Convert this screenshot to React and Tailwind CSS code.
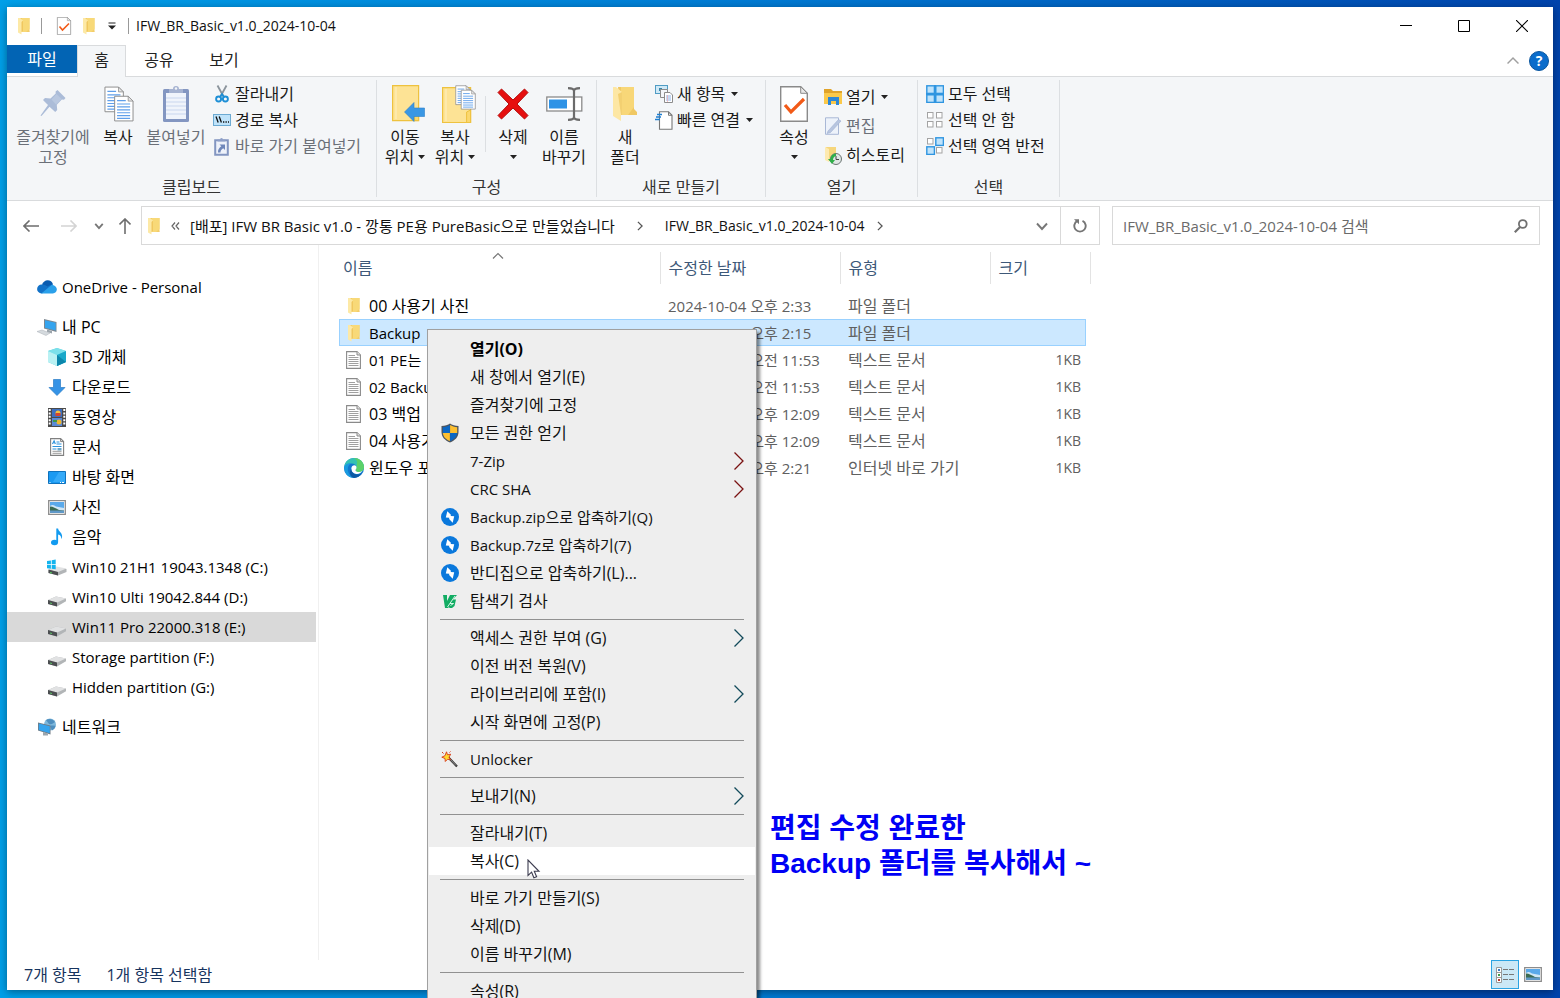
import React from 'react';

/* ---------- shared icons ---------- */
const Folder = ({ className = 'h-[18px] w-[14px]' }) => (
  <svg viewBox="0 0 14 18" className={className} aria-hidden="true">
    <path d="M3 1h9.500v13.500L13 15H5z" fill="#f3cd6a" />
    <path d="M5 1h7.500v11L9 15H5z" fill="#f8d978" />
    <path d="M1 1h2l3 2.500v11L4.500 15v2.500L1 15.500z" fill="#fde9a6" />
    <path d="M6 3.500v11L4.500 15V5z" fill="#f0c75f" />
  </svg>
);
const BigFolder = () => (
  <svg viewBox="0 0 24 36" className="h-9 w-6" aria-hidden="true">
    <path d="M5 1h16v22l3 3v3H8z" fill="#f0c863" />
    <path d="M8 1h13v20l-6 8H8z" fill="#f8d778" />
    <path d="M0 1h3l6 5v23H8v6L0 30z" fill="#fde7a4" />
    <path d="M9 6v23H8L5 8z" fill="#f3d071" />
  </svg>
);
const Caret = () => (
  <svg viewBox="0 0 7 4" className="h-1 w-[7px] shrink-0" aria-hidden="true"><path d="M0 0h7L3.500 4z" fill="#222" /></svg>
);
const Chev = ({ d, className, stroke = '#666', w = 1.500 }) => (
  <svg viewBox="0 0 12 12" className={className} aria-hidden="true"><path d={d} fill="none" stroke={stroke} strokeWidth={w} /></svg>
);
const DocCheck = ({ className }) => (
  <svg viewBox="0 0 28 36" className={className} aria-hidden="true">
    <path d="M.7.7h20l6.600 6.600v28H.7z" fill="#fff" stroke="#8a8a8a" strokeWidth="1.400" />
    <path d="M20.700.7v6.600h6.600z" fill="#e8e8e8" stroke="#8a8a8a" />
    <path d="M5 19l6 7L24 13" fill="none" stroke="#f25a17" strokeWidth="3.200" />
  </svg>
);
const PageLines = ({ x, y }) => (
  <g transform={`translate(${x} ${y})`}>
    <path d="M.5.5h14l5 5v20.500H.5z" fill="#fff" stroke="#8c8c8c" />
    <path d="M14.500.5v5h5z" fill="#e6e6e6" stroke="#8c8c8c" strokeWidth=".8" />
    <path d="M3 5h9M3 8.500h13.500M3 11.500h13.500M3 14.500h13.500M3 17.500h13.500M3 20.500h13.500M3 23.300h13.500" stroke="#5f9fea" strokeWidth="1.200" />
  </g>
);

/* ---------- ribbon icons ---------- */
const PinIcon = () => (
  <svg viewBox="0 0 26 27" className="h-[27px] w-[26px]" aria-hidden="true">
    <path d="M17.500 0l8 8-1.500 1.800-2.200-.2-5 5.200.4 5.200-2 2L9.500 16.700 1.500 26l-1-.5L8 15 3 10l2-2 5.500.5 5.200-5-.1-2z" fill="#abbcd8" />
    <path d="M16.500 4l5 5-5.500 5.500-4.500-5z" fill="#b9c8e0" />
  </svg>
);
const CopyIcon = () => (
  <svg viewBox="0 0 31 37" className="ml-0.5 h-9 w-[30px]" aria-hidden="true"><PageLines x={.5} y={.5} /><PageLines x={10.500} y={10} /></svg>
);
const PasteIcon = () => (
  <svg viewBox="0 0 26 37" className="h-[37px] w-[26px]" aria-hidden="true">
    <rect x="0" y="4" width="26" height="33" rx="1.500" fill="#8396c1" />
    <rect x="3" y="8" width="20" height="26" fill="#f0f4fb" />
    <path d="M3 13h20M3 17h20M3 21h20M3 25h20M3 29h20" stroke="#c9d6ee" />
    <path d="M6 8V4h4a3 3 0 016 0h4v4z" fill="#a6b3d1" /><circle cx="13" cy="3.500" r="1.200" fill="#f4f6f8" />
  </svg>
);
const CutIcon = () => (
  <svg viewBox="0 0 18 18" className="size-[18px]" aria-hidden="true">
    <path d="M4.500.5l6 11M13.500.5l-6 11" stroke="#8b949c" strokeWidth="1.800" fill="none" />
    <circle cx="5.600" cy="14" r="2.500" fill="none" stroke="#1d8fd6" strokeWidth="1.900" />
    <circle cx="12.400" cy="14" r="2.500" fill="none" stroke="#1d8fd6" strokeWidth="1.900" />
    <path d="M7 12l2-3 2 3" fill="none" stroke="#1d8fd6" strokeWidth="1.600" />
  </svg>
);
const PathIcon = () => (
  <svg viewBox="0 0 18 12" className="h-3 w-[18px]" aria-hidden="true">
    <rect x=".5" y=".5" width="17" height="11" fill="#bfe3fa" stroke="#6caad2" />
    <path d="M3 2.500l2.200 6M6.200 2.500l2.200 6" stroke="#111" strokeWidth="1.300" />
    <path d="M10 8h1.300M12.500 8h1.300M15 8h1" stroke="#111" strokeWidth="1.300" />
  </svg>
);
const ShortcutPasteIcon = () => (
  <svg viewBox="0 0 15 19" className="h-[19px] w-[15px]" aria-hidden="true">
    <path d="M1.200 3.200h12.600v14.600H1.200z" fill="#eef2fa" stroke="#8396c1" strokeWidth="2" />
    <path d="M3.500 4.500V2.500H6a1.500 1.500 0 013 0h2.500v2z" fill="#8fa0c8" />
    <path d="M5.500 7.500H11V13L9.200 11.200c-2 1.300-2.700 2.500-2.700 4.300H4c-.2-2.800 1-4.500 3.300-6.200z" fill="#6f87ba" />
  </svg>
);
const MoveIcon = () => (
  <svg viewBox="0 0 33 37" className="ml-1.5 h-[37px] w-[33px]" aria-hidden="true">
    <path d="M.6.6h26v35H.6z" fill="#fde395" stroke="#eec23f" strokeWidth="1.200" />
    <path d="M26.600 23v12.600h-4V25z" fill="#fbd86f" stroke="#eec23f" />
    <path d="M4 2v32" stroke="#fff0bf" /><path d="M12.500 27L22 17.500v5.500h10.500v8.500H22v5z" fill="#3a97e4" stroke="#2b7fca" strokeWidth=".6" />
  </svg>
);
const CopyToIcon = () => (
  <svg viewBox="0 0 34 38" className="ml-2 h-[38px] w-[34px]" aria-hidden="true">
    <path d="M.6 2.600h28v35H.6z" fill="#fde395" stroke="#eec23f" strokeWidth="1.200" />
    <path d="M28.600 25v12.600h-4V27z" fill="#fbd86f" stroke="#eec23f" /><path d="M4 4v32" stroke="#fff0bf" />
    <g transform="translate(13 0) scale(.74)"><PageLines x={.5} y={.5} /></g><g transform="translate(18.500 4.500) scale(.74)"><PageLines x={.5} y={.5} /></g>
  </svg>
);
const DeleteIcon = () => (
  <svg viewBox="0 0 32 32" className="size-8" aria-hidden="true">
    <path d="M4.500 1L16 12 27.500 1 31 4.500 20 16l11 11.500-3.500 3.500L16 20 4.500 31 1 27.500 12 16 1 4.500z" fill="#e60f0f" stroke="#b50c0c" />
  </svg>
);
const RenameIcon = () => (
  <svg viewBox="0 0 37 34" className="h-[34px] w-[37px]" aria-hidden="true">
    <rect x=".8" y="10" width="35" height="14" fill="#fff" stroke="#8a8a8a" strokeWidth="1.300" />
    <rect x="3" y="12.500" width="18" height="9" fill="#2e93e6" />
    <path d="M22 1.200c3 0 6 .3 6 2.800 0-2.500 3-2.800 6-2.800M22 32.800c3 0 6-.3 6-2.800 0 2.500 3 2.800 6 2.800M28 3v28" fill="none" stroke="#6b6b6b" strokeWidth="2.200" />
  </svg>
);
const NewItemIcon = () => (
  <svg viewBox="0 0 18 18" className="size-[18px]" aria-hidden="true">
    <rect x=".5" y=".5" width="12" height="8" fill="#cfe9f7" stroke="#4f9cc4" /><path d="M4 3h3v3H4z" fill="#3b86a8" />
    <path d="M5.500 4.500h7v8h-7z" fill="#f4f7fb" stroke="#8c8c8c" /><path d="M9.500 7.500h5.500l2.500 2.500v7.500h-8z" fill="#fff" stroke="#8c8c8c" />
    <path d="M11 11h5M11 13h5M11 15h5" stroke="#8db4ea" /><path d="M12.500 10v7" stroke="#f0a0a0" strokeWidth=".6" />
  </svg>
);
const EasyIcon = () => (
  <svg viewBox="0 0 18 19" className="h-[19px] w-[18px]" aria-hidden="true">
    <path d="M4.500.8h9l3.500 3.500v13.900H4.500z" fill="#fff" stroke="#777" strokeWidth="1.100" /><path d="M13.500.8v3.500H17" fill="none" stroke="#777" />
    <path d="M2 3.500h5M1 6h5M0 8.500h5" stroke="#1f7fd1" strokeWidth="1.300" />
  </svg>
);
const OpenIcon = () => (
  <svg viewBox="0 0 18 16" className="h-4 w-[18px]" aria-hidden="true">
    <path d="M0 0h7l2 2h9v13H0z" fill="#e0a32a" /><path d="M0 4h18v11H0z" fill="#fbc94a" />
    <path d="M4 16V8h11v8h-3v-4H7v4z" fill="#2e87d6" />
  </svg>
);
const EditIcon = () => (
  <svg viewBox="0 0 18 18" className="size-[18px]" aria-hidden="true">
    <path d="M1.500.8h13v16.500h-13z" fill="#edf2fa" stroke="#a9b8d6" /><path d="M4 14L14.500 2.500l2.500 1.500L6.500 15.500 3 16.500z" fill="#b7c5df" stroke="#9fb0d2" strokeWidth=".6" />
  </svg>
);
const HistoryIcon = () => (
  <svg viewBox="0 0 18 19" className="h-[19px] w-[18px]" aria-hidden="true">
    <path d="M2 1h10v14H4z" fill="#f6d67c" /><path d="M1 1l4 2v13l-4-2z" fill="#fdeab0" />
    <circle cx="12" cy="13" r="5.500" fill="#dfe6e4" stroke="#6b7472" /><path d="M12 10v3.500h3" stroke="#444" fill="none" />
    <path d="M12 7.500A5.500 5.500 0 006.500 13H4l4 5 3-4H9c0-2 1-3.500 3-4z" fill="#2fae49" />
  </svg>
);
const SelectIcon = ({ on }) => (
  <svg viewBox="0 0 18 18" className="size-[18px]" aria-hidden="true">
    {[[1, 1], [10, 1], [1, 10], [10, 10]].map(([x, y], i) =>
      on[i]
        ? <rect key={i} x={x - .2} y={y - .2} width="7.600" height="7.600" fill="#bfe3fb" stroke="#2f95e0" strokeWidth="1.400" />
        : <rect key={i} x={x + .5} y={y + .5} width="5.500" height="5.500" fill="#fff" stroke="#a3a3a3" />)}
    {on.every(Boolean) && <path d="M9 0v18M0 9h18" stroke="#2f95e0" strokeWidth="2" />}
  </svg>
);

/* ---------- tree icons ---------- */
const treeIcons = {
  cloud: (
    <svg viewBox="0 0 20 14" className="h-[14px] w-5"><path d="M5 4.500C6 1.800 8.200.2 10.700.2c2.500 0 4.500 1.500 5.200 3.700L12 8z" fill="#0a5cb0" /><path d="M4.500 13.500A4.500 4.500 0 014.700 4.500c2-.3 4 .5 5.500 2L16 3.900l-1 3-10 6.600z" fill="#1272c8" /><path d="M4.300 13.500L14.500 5c3 0 5.300 1.800 5.300 4.600 0 2.300-1.700 3.900-4 3.900z" fill="#2aa0ea" /></svg>
  ),
  pc: (
    <svg viewBox="0 0 20 17" className="h-[17px] w-5"><path d="M7 0l12.500 3v10L7 9.500z" fill="#7d8790" /><path d="M8 1.300l10.700 2.500v7.700L8 8.800z" fill="#35a4ee" /><path d="M10 10.500l5 1.500v2.500l-5-1.500z" fill="#9ca5ac" /><path d="M0 12.500l5-1.500 8 3-4 2.500z" fill="#d5dade" stroke="#aab0b6" strokeWidth=".5" /></svg>
  ),
  cube: (
    <svg viewBox="0 0 18 18" className="size-[18px]"><path d="M9 0l9 3v11l-9 4-9-4V3z" fill="#5fd3e0" /><path d="M9 0l9 3-9 4-9-4z" fill="#7be0ea" /><path d="M0 3l9 4v11l-9-4z" fill="#b9f1f3" /><path d="M9 7l9-4v11l-9 4z" fill="#1aa8c9" /><path d="M9 7l9 7-9 4z" fill="#0c86ab" /></svg>
  ),
  down: (<svg viewBox="0 0 18 17" className="h-[17px] w-[18px]"><path d="M5.500.5h7v8h4.500L9 16.500 1 8.500h4.500z" fill="#3593e6" stroke="#2a7bc6" strokeWidth=".7" /></svg>),
  video: (
    <svg viewBox="0 0 18 19" className="h-[19px] w-[18px]"><path d="M0 0h18v19H0z" fill="#4a4a4a" /><path d="M1.700 1v17M16.300 1v17" stroke="#fff" strokeWidth="2" strokeDasharray="2 1.400" /><path d="M4 1h10v8H4z" fill="#3d6fc0" /><path d="M4 10h10v8H4z" fill="#5b8ad6" /><circle cx="10" cy="5" r="2.500" fill="#f3c13a" /><path d="M7.500 5h5v3h-5z" fill="#d4452f" /><circle cx="11" cy="14" r="2.500" fill="#f0b62f" /><path d="M5 12h4v2H5z" fill="#3f9a49" /></svg>
  ),
  doc: (
    <svg viewBox="0 0 18 18" className="size-[18px]"><path d="M2.600.6h10l3 3v13.800h-13z" fill="#fff" stroke="#808080" strokeWidth="1.100" /><path d="M12.600.6v3h3" fill="none" stroke="#808080" /><path d="M4.500 6l1.600-3 1.200 3M8.500 4h3M8.500 6h5M4.500 8.500h9M4.500 11h4" stroke="#2c92dc" strokeWidth="1.200" fill="none" /><path d="M9.500 10h4v2.500h-4z" fill="#6aa6c9" /><path d="M4.500 13.300h9M4.500 15.300h9" stroke="#9a9a9a" /></svg>
  ),
  desktop: (<svg viewBox="0 0 18 13" className="h-[13px] w-[18px]"><path d="M.5.5h17v12H.5z" fill="#1a9af2" stroke="#0f72bd" /><path d="M11 1h6v10H5z" fill="#35aaf8" /><path d="M1.500 11.500h1M12 11.500h1M14 11.500h2" stroke="#fff" /></svg>),
  photo: (<svg viewBox="0 0 18 15" className="h-[15px] w-[18px]"><path d="M.7.7h16.600v13.600H.7z" fill="#fff" stroke="#8c8c8c" strokeWidth="1.300" /><path d="M2 2h14v6H2z" fill="#5aa9ea" /><path d="M2 6c3-2 4-1 6 .5L16 8v2H2z" fill="#cfe6f6" /><path d="M2 6.500c3 0 6 2 9 3.500l5 .5V11H2z" fill="#3c6b52" /><path d="M2 10.500h14V13H2z" fill="#5f98c7" /></svg>),
  music: (<svg viewBox="0 0 18 18" className="size-[18px]"><ellipse cx="6.500" cy="14.500" rx="3.500" ry="2.800" fill="#139bf0" /><path d="M8.300 14.500V.5h1.800c.2 3 4.400 4 4 8.500-.2 1-.6 1.700-1 2 .4-2.500-.8-4-3-4.500v8z" fill="#139bf0" /></svg>),
  winDrive: (
    <svg viewBox="0 0 20 18" className="mt-0.5 h-[18px] w-5"><path d="M1.500 11l8-2.500 10 1.500v3L11 16.500 1.500 14z" fill="#b2b5b7" /><path d="M1.500 10.500l8-3 10 2L11 13z" fill="#e1e2e3" /><path d="M1.500 10.500L11 13v3.500L1.500 14z" fill="#4b4e50" /><path d="M3 13l2 .5v1L3 14z" fill="#4fd45b" /><path d="M0 2l3.900-.6v3.800H0zM4.700 1.200l4-.7v4.700h-4zM0 6h3.900v3.700L0 9.200zM4.700 6h4v4.200l-4-.5z" fill="#14b4ee" /></svg>
  ),
  drive: (
    <svg viewBox="0 0 18 11" className="mt-2 h-[11px] w-[18px]"><path d="M0 4l8-3.500 10 2v2.800L9 10.500 0 8z" fill="#b2b5b7" /><path d="M0 4L8 .5l10 2L9 6.500z" fill="#e1e2e3" /><path d="M0 4l9 2.500v4L0 8z" fill="#4b4e50" /><path d="M2 6.500l2 .6v1l-2-.6z" fill="#59c564" /></svg>
  ),
  network: (
    <svg viewBox="0 0 18 18" className="size-[18px]"><circle cx="12" cy="6.500" r="6" fill="#7fb8dc" /><path d="M8 2c3-2 7-1 9 2-2 1-3 3-6 2zM12 8c2-1 4 0 5.500-.5 0 2-1.500 4-3.500 5z" fill="#4f8fbf" /><path d="M0 4.500l12.500 3v9L0 12.500z" fill="#6f7a83" /><path d="M.8 5.500l11 2.700v7L.8 12z" fill="#35a4ee" /><path d="M5 14l5 1.500v2H5z" fill="#9ba5ad" /></svg>
  ),
};

const tree = [
  { icon: 'cloud', label: 'OneDrive - Personal', root: true, latin: true },
  { icon: 'pc', label: '내 PC', root: true, gap: true },
  { icon: 'cube', label: '3D 개체' },
  { icon: 'down', label: '다운로드' },
  { icon: 'video', label: '동영상' },
  { icon: 'doc', label: '문서' },
  { icon: 'desktop', label: '바탕 화면' },
  { icon: 'photo', label: '사진' },
  { icon: 'music', label: '음악' },
  { icon: 'winDrive', label: 'Win10 21H1 19043.1348 (C:)', latin: true },
  { icon: 'drive', label: 'Win10 Ulti 19042.844 (D:)', latin: true },
  { icon: 'drive', label: 'Win11 Pro 22000.318 (E:)', latin: true, active: true },
  { icon: 'drive', label: 'Storage partition (F:)', latin: true },
  { icon: 'drive', label: 'Hidden partition (G:)', latin: true },
  { icon: 'network', label: '네트워크', root: true, gap: true },
];

/* ---------- file list ---------- */
const TextFile = () => (
  <svg viewBox="0 0 15 18" className="h-[18px] w-[15px]" aria-hidden="true">
    <path d="M.6.6h10.400l3.400 3.400v13.400H.6z" fill="#fff" stroke="#8a8a8a" strokeWidth="1.100" /><path d="M11 .6V4h3.400" fill="#e5e5e5" stroke="#8a8a8a" />
    <path d="M2.500 4.500H9M2.500 6.500h10M2.500 8.500h10M2.500 10.500h10M2.500 12.500h10M2.500 14.500h10" stroke="#a0a0a0" />
  </svg>
);
const EdgeIcon = () => (
  <svg viewBox="0 0 20 20" className="size-5" aria-hidden="true">
    <circle cx="10" cy="10" r="10" fill="#1178cf" />
    <path d="M.3 8.500C1 3.500 5 0 10 0c6 0 10 4.500 10 9 0 3-2.300 5-5 5-2 0-3.500-.8-3.500-1.800 0-.8 1-1.200 1-2.700 0-2-1.800-4-5-4-3.500 0-6 1.500-7.200 3z" fill="#35c1b4" />
    <path d="M10 0c6 0 10 4.500 10 9 0 3-2.300 5-5 5-2 0-3.500-.8-3.500-1.800 0-.8 1-1.200 1-2.700C12.500 6 15 3 10 0z" fill="#5bd16a" />
    <path d="M.3 8.500C2 5.500 5 5 7.500 5.500c-3 .6-4.200 4-3.500 7.500.6 3.300 3 6 6.500 7A10 10 0 01.3 8.500z" fill="#1a9be0" />
    <path d="M7.300 10.500c.2-2 1.600-3.200 3-3.200 1.500 0 2.200 1 2.200 2.200 0 1.500-1 1.900-1 2.700 0 1 1.500 1.800 3.500 1.800 1.300 0 2.500-.4 3.500-1.200-1.300 2.200-3.500 3.500-6 3.200-3.200-.3-5.400-2.700-5.200-5.500z" fill="#fff" />
    <path d="M7.300 10.500c-.2 3.500 2.500 6.500 7.500 6 1.200-.1 2.300-.8 3-1.500A10 10 0 0110 20c-3.500-1-5.500-5-2.700-9.500z" fill="#0c59a4" />
  </svg>
);
const files = [
  { icon: <Folder />, name: '00 사용기 사진', date: '2024-10-04 오후 2:33', type: '파일 폴더', size: '' },
  { icon: <Folder />, name: 'Backup', date: '2024-10-04 오후 2:15', type: '파일 폴더', size: '', selected: true, latin: true },
  { icon: <TextFile />, name: '01 PE는', date: '2024-10-04 오전 11:53', type: '텍스트 문서', size: '1KB', latin: true },
  { icon: <TextFile />, name: '02 Backup', date: '2024-10-04 오전 11:53', type: '텍스트 문서', size: '1KB', latin: true },
  { icon: <TextFile />, name: '03 백업', date: '2024-10-04 오후 12:09', type: '텍스트 문서', size: '1KB' },
  { icon: <TextFile />, name: '04 사용기', date: '2024-10-04 오후 12:09', type: '텍스트 문서', size: '1KB' },
  { icon: <EdgeIcon />, name: '윈도우 포', date: '2024-10-04 오후 2:21', type: '인터넷 바로 가기', size: '1KB' },
];

/* ---------- context menu ---------- */
const Shield = () => (
  <svg viewBox="0 0 18 20" className="h-5 w-[18px]" aria-hidden="true">
    <path d="M9 .5C11 2 14 3 17.500 3v6c0 5-3.500 8.500-8.500 10.500C4 17.500.5 14 .5 9V3C4 3 7 2 9 .5z" fill="#4c5560" />
    <path d="M8.900 2C7 3.200 4.500 4 1.800 4.200V10h7.100z" fill="#0b67c4" /><path d="M9.100 2c2 1.200 4.400 2 7.100 2.200V10H9.100z" fill="#fdbf2f" />
    <path d="M1.900 10h7v8C5 16.500 2.300 14 1.900 10z" fill="#fdbf2f" /><path d="M16.100 10h-7v8c3.900-1.500 6.600-4 7-8z" fill="#0b67c4" />
  </svg>
);
const Bolt = () => (
  <svg viewBox="0 0 18 18" className="size-[18px]" aria-hidden="true"><circle cx="9" cy="9" r="9" fill="#0a78dc" /><path d="M6.300 3.200l3.600 3.600-.2 1.200 3.500.3-1.500 6.500-3.600-3.800.2-1.200-3.500-.3z" fill="#fff" /></svg>
);
const V3 = () => (
  <svg viewBox="0 0 14 13" className="h-[13px] w-[14px]" aria-hidden="true"><path d="M0 0h4v6l3-6h7l-4 4.500h3L11.500 11 9 13H6.500l-.5-1-1 1H2z" fill="#12ac63" /><path d="M4.500 12L12 1M7 8.500h3.500l-3 2" stroke="#e9fff4" strokeWidth=".9" fill="none" /></svg>
);
const Wand = () => (
  <svg viewBox="0 0 18 17" className="h-[17px] w-[18px]" aria-hidden="true"><path d="M7 6l9 9.500" stroke="#333" strokeWidth="2.200" /><path d="M8.500 7.500L15 14.500" stroke="#b9b9b9" strokeWidth=".7" /><path d="M5.500.8l1 3 3.200-.6L8 6.200l1.500 2.600-3-.5L4.300 10.500 4 7.500.8 6.200 4 4.700z" fill="#ffd92e" stroke="#d63a1c" strokeWidth=".9" /><path d="M1 1l1.500 1.500M9.500.5l-1 1" stroke="#d63a1c" /></svg>
);
const menu = [
  [
    { label: '열기(O)', bold: true },
    { label: '새 창에서 열기(E)' },
    { label: '즐겨찾기에 고정' },
    { label: '모든 권한 얻기', icon: <Shield /> },
    { label: '7-Zip', latin: true, sub: '#7a1212' },
    { label: 'CRC SHA', latin: true, sub: '#7a1212' },
    { label: 'Backup.zip으로 압축하기(Q)', latin: true, icon: <Bolt /> },
    { label: 'Backup.7z로 압축하기(7)', latin: true, icon: <Bolt /> },
    { label: '반디집으로 압축하기(L)...', icon: <Bolt /> },
    { label: '탐색기 검사', icon: <V3 /> },
  ],
  [
    { label: '액세스 권한 부여 (G)', sub: '#124a5a' },
    { label: '이전 버전 복원(V)' },
    { label: '라이브러리에 포함(I)', sub: '#124a5a' },
    { label: '시작 화면에 고정(P)' },
  ],
  [{ label: 'Unlocker', latin: true, icon: <Wand /> }],
  [{ label: '보내기(N)', sub: '#124a5a' }],
  [{ label: '잘라내기(T)' }, { label: '복사(C)', hot: true }],
  [{ label: '바로 가기 만들기(S)' }, { label: '삭제(D)' }, { label: '이름 바꾸기(M)' }],
  [{ label: '속성(R)' }],
];

function ContextMenu() {
  return (
    <div role="menu" className="absolute left-[427px] top-[329px] z-10 w-[330px] border border-[#a0a0a0] bg-[#eeeeee] px-px pt-[5px] pb-1 text-[#111] shadow-[3px_3px_3px_rgba(0,0,0,0.45)]">
      {menu.map((group, g) => (
        <div key={g} role="group">
          {g > 0 && <div className="mx-[11px] flex h-[9px] items-center"><div className="h-px grow bg-[#919191]" /></div>}
          {group.map((it) => (
            <button key={it.label} role="menuitem" className={`relative flex h-7 w-full items-center pr-[11px] text-left ${it.hot ? 'bg-white' : ''}`}>
              <span className="flex w-[41px] shrink-0 items-center justify-center">{it.icon}</span>
              <span className={`grow whitespace-nowrap leading-7 ${it.latin ? 'text-[15px]' : 'text-[16px]'} ${it.bold ? 'font-bold text-black' : ''}`}>{it.label}</span>
              {it.sub && (
                <svg viewBox="0 0 10 18" className="h-[18px] w-2.5" aria-hidden="true"><path d="M.5.5L9 9 .5 17.500" fill="none" stroke={it.sub} strokeWidth="1.300" /></svg>
              )}
              {it.hot && (
                <svg viewBox="0 0 14 20" className="absolute left-[98px] top-3 z-10 h-5 w-3.5" aria-hidden="true"><path d="M1 1v15.500l3.600-3.300 2.300 5.600 2.700-1.100-2.300-5.400H12z" fill="#fff" stroke="#3d3d50" strokeWidth="1.100" /></svg>
              )}
            </button>
          ))}
        </div>
      ))}
    </div>
  );
}

/* ---------- ribbon ---------- */
const Group = ({ label, className, children }) => (
  <section aria-label={label} className={`my-[3px] flex shrink-0 flex-col border-r border-[#dcdfe2] ${className}`}>
    <div className="flex h-[97px] items-start">{children}</div>
    <div className="text-center leading-5 text-[#333]">{label}</div>
  </section>
);
const Big = ({ icon, lines, caret, disabled, className }) => (
  <button className={`flex shrink-0 flex-col items-center whitespace-nowrap leading-5 ${disabled ? 'text-[#6b7078]' : 'text-[#1a1a1a]'} ${className}`}>
    <span className="flex h-[47px] items-center justify-center">{icon}</span>
    {lines.map((l, i) => (
      <span key={i} className="flex h-5 items-center gap-1">{l}{caret && i === lines.length - 1 && <Caret />}</span>
    ))}
  </button>
);
const Small = ({ icon, label, caret, disabled }) => (
  <button className={`flex items-center gap-1 whitespace-nowrap leading-5 ${disabled ? 'text-[#6b7078]' : 'text-[#1a1a1a]'}`}>
    <span className="flex w-[19px] justify-center">{icon}</span>{label}{caret && <span className="ml-0.5"><Caret /></span>}
  </button>
);

function Ribbon() {
  return (
    <div className="flex border-y border-[#d9dbdd] bg-[#f4f6f8]">
      <Group label="클립보드" className="w-[370px]">
        <Big className="ml-[5px] w-[82px]" disabled icon={<PinIcon />} lines={['즐겨찾기에', '고정']} />
        <Big className="w-12" icon={<CopyIcon />} lines={['복사']} />
        <Big className="w-[68px]" disabled icon={<PasteIcon />} lines={['붙여넣기']} />
        <div className="ml-0.5 flex flex-col gap-1.5 pt-1">
          <Small icon={<CutIcon />} label="잘라내기" />
          <Small icon={<PathIcon />} label="경로 복사" />
          <Small disabled icon={<ShortcutPasteIcon />} label="바로 가기 붙여넣기" />
        </div>
      </Group>
      <Group label="구성" className="w-[220px]">
        <Big className="ml-[3px] w-[50px]" icon={<MoveIcon />} caret lines={['이동', '위치']} />
        <Big className="w-[50px]" icon={<CopyToIcon />} caret lines={['복사', '위치']} />
        <div className="mt-4 ml-[5px] mr-0.5 h-14 w-px bg-[#dcdfe2]" />
        <Big className="w-[50px]" icon={<DeleteIcon />} caret lines={['삭제', '']} />
        <Big className="w-[52px]" icon={<RenameIcon />} lines={['이름', '바꾸기']} />
      </Group>
      <Group label="새로 만들기" className="w-[169px]">
        <Big className="ml-[3px] w-[50px]" icon={<BigFolder />} lines={['새', '폴더']} />
        <div className="ml-1 flex flex-col gap-1.5 pt-1">
          <Small icon={<NewItemIcon />} caret label="새 항목" />
          <Small icon={<EasyIcon />} caret label="빠른 연결" />
        </div>
      </Group>
      <Group label="열기" className="w-[152px]">
        <Big className="ml-[3px] w-[50px]" icon={<DocCheck className="h-9 w-7" />} caret lines={['속성', '']} />
        <div className="ml-1 flex flex-col gap-[9px] pt-[7px]">
          <Small icon={<OpenIcon />} caret label="열기" />
          <Small disabled icon={<EditIcon />} label="편집" />
          <Small icon={<HistoryIcon />} label="히스토리" />
        </div>
      </Group>
      <Group label="선택" className="w-[142px]">
        <div className="ml-[7px] flex flex-col gap-1.5 pt-1">
          <Small icon={<SelectIcon on={[1, 1, 1, 1]} />} label="모두 선택" />
          <Small icon={<SelectIcon on={[0, 0, 0, 0]} />} label="선택 안 함" />
          <Small icon={<SelectIcon on={[0, 1, 1, 0]} />} label="선택 영역 반전" />
        </div>
      </Group>
    </div>
  );
}

function TitleBar() {
  return (
    <header className="flex h-[38px] items-center">
      <div className="flex grow items-center">
        <span className="ml-2.5"><Folder /></span>
        <span className="ml-2.5 h-4 w-px bg-[#999]" />
        <button aria-label="속성" className="ml-3.5"><DocCheck className="h-[18px] w-4" /></button>
        <button aria-label="새 폴더" className="ml-2.5"><Folder /></button>
        <button aria-label="빠른 실행 도구 모음 사용자 지정" className="ml-3">
          <svg viewBox="0 0 8 8" className="size-2"><path d="M.5 1h7" stroke="#222" /><path d="M0 3.500h8L4 7.500z" fill="#222" /></svg>
        </button>
        <span className="ml-3 h-4 w-px bg-[#999]" />
        <h1 className="ml-[7px] text-[14px] leading-6 text-[#111]">IFW_BR_Basic_v1.0_2024-10-04</h1>
      </div>
      <div className="flex pr-0.5">
        <button aria-label="최소화" className="flex h-9 w-[58px] items-center justify-center"><svg viewBox="0 0 12 12" className="size-3"><path d="M0 5.500h12" stroke="#000" /></svg></button>
        <button aria-label="최대화" className="flex h-9 w-[58px] items-center justify-center"><svg viewBox="0 0 12 12" className="size-3"><path d="M.5.5h11v11H.5z" fill="none" stroke="#000" /></svg></button>
        <button aria-label="닫기" className="flex h-9 w-[58px] items-center justify-center"><svg viewBox="0 0 12 12" className="size-3"><path d="M0 0l12 12M12 0L0 12" stroke="#000" strokeWidth="1.100" /></svg></button>
      </div>
    </header>
  );
}

function Tabs() {
  return (
    <div className="flex h-[31px] items-start text-[#222]">
      <button className="h-7 w-[70px] bg-[#0264b4] leading-7 text-white">파일</button>
      <button className="relative z-[1] h-8 w-[49px] border border-b-0 border-[#d9dbdd] bg-[#f4f6f8] pb-1">홈</button>
      <button className="h-[31px] w-[66px] leading-[31px]">공유</button>
      <button className="h-[31px] w-16 leading-[31px]">보기</button>
      <div className="flex h-[31px] grow items-center justify-end gap-2.5 pr-1">
        <button aria-label="리본 최소화"><Chev className="size-3" d="M.5 8.500L6 3l5.500 5.500" stroke="#a0a0a0" /></button>
        <button aria-label="도움말" className="flex size-5 items-center justify-center rounded-full border border-[#0b569e] bg-[#0a6ccb] text-[14px] font-bold leading-none text-white">?</button>
      </div>
    </div>
  );
}

function AddressRow() {
  return (
    <div className="flex items-center pt-[5px] pr-[13px] text-[#111]">
      <div className="flex w-[134px] shrink-0 items-center pl-4">
        <button aria-label="뒤로"><svg viewBox="0 0 16 12" className="h-3 w-4"><path d="M6.500.5L1 6l5.500 5.500M1 6h15" fill="none" stroke="#6e6e6e" strokeWidth="1.600" /></svg></button>
        <button aria-label="앞으로" className="ml-[22px]"><svg viewBox="0 0 16 12" className="h-3 w-4"><path d="M9.500.5L15 6l-5.500 5.500M15 6H0" fill="none" stroke="#d4d4d4" strokeWidth="1.600" /></svg></button>
        <button aria-label="최근 위치" className="ml-[17px]"><Chev className="size-2.5" d="M1.500 3.500L6 8.500l4.500-5" stroke="#777" w={2.200} /></button>
        <button aria-label="위로" className="ml-[15px]"><svg viewBox="0 0 12 16" className="h-4 w-3"><path d="M.5 6.500L6 1l5.500 5.500M6 1v15" fill="none" stroke="#6e6e6e" strokeWidth="1.600" /></svg></button>
      </div>
      <div className="flex h-[39px] min-w-0 grow items-center border border-[#d9d9d9]">
        <span className="ml-[5px]"><Folder /></span>
        <svg viewBox="0 0 9 8" className="ml-2.5 h-2 w-[9px]" aria-hidden="true"><path d="M4 .5L1 4l3 3.500M8 .5L5 4l3 3.500" fill="none" stroke="#666" strokeWidth="1.200" /></svg>
        <button className="ml-2.5 whitespace-nowrap text-[15px]">[배포] IFW BR Basic v1.0 - 깡통 PE용 PureBasic으로 만들었습니다</button>
        <Chev className="mx-5 size-2.5" d="M3.500 1l5 5-5 5" stroke="#555" />
        <button className="whitespace-nowrap text-[14px]">IFW_BR_Basic_v1.0_2024-10-04</button>
        <Chev className="mx-2.5 size-2.5" d="M3.500 1l5 5-5 5" stroke="#555" />
        <button aria-label="이전 위치" className="ml-auto flex h-full w-9 items-center justify-center"><Chev className="size-3" d="M1 3.500L6 9l5-5.500" stroke="#777" w={1.900} /></button>
        <button aria-label="새로 고침" className="flex h-full w-[39px] shrink-0 items-center justify-center border-l border-[#d9d9d9]">
          <svg viewBox="0 0 14 14" className="size-3.5"><path d="M9.500 1.800a5.700 5.700 0 11-5 0" fill="none" stroke="#757575" strokeWidth="1.900" /><path d="M1 .3h5v5z" fill="#757575" /></svg>
        </button>
      </div>
      <label className="ml-3 flex h-[39px] w-[428px] shrink-0 items-center border border-[#d9d9d9] pr-[11px] pl-2.5">
        <input aria-label="검색" placeholder="IFW_BR_Basic_v1.0_2024-10-04 검색" className="min-w-0 grow bg-transparent text-[15px] outline-none placeholder:text-[#6a6a6a]" />
        <svg viewBox="0 0 14 14" className="size-3.5" aria-hidden="true"><circle cx="8.800" cy="5" r="3.900" fill="none" stroke="#707070" strokeWidth="1.800" /><path d="M6 8L.8 13.200" stroke="#707070" strokeWidth="2.200" /></svg>
      </label>
    </div>
  );
}

function Tree() {
  return (
    <nav className="w-[312px] shrink-0 border-r border-[#f0f0f0] pt-[27px] pr-[2px] text-black">
      {tree.map((n) => (
        <a key={n.label} href="#" className={`flex h-[30px] items-center gap-[5px] whitespace-nowrap ${n.gap ? 'mt-2.5' : ''} ${n.root ? 'pl-[30px]' : 'pl-10'} ${n.active ? 'bg-[#d9d9d9]' : ''} ${n.latin ? 'text-[15px]' : 'text-[16px]'}`}>
          <span className="flex w-5 shrink-0 items-center justify-center">{treeIcons[n.icon]}</span>
          <span>{n.label}</span>
        </a>
      ))}
    </nav>
  );
}

function FileTable() {
  return (
    <main className="min-w-0 grow pt-[7px] pl-5">
      <table className="w-[747px] table-fixed border-collapse text-left">
        <colgroup><col className="w-[321px]" /><col className="w-[180px]" /><col className="w-[150px]" /><col /></colgroup>
        <thead>
          <tr className="h-8 text-[#3d5878]">
            <th className="relative border-r border-[#e3e3e3] p-0 pl-1 font-[380]">이름
              <span className="absolute top-0 left-[153px]"><Chev className="size-3" d="M1 6.500L6 1.500l5 5" stroke="#777" w={1.200} /></span>
            </th>
            <th className="border-r border-[#e3e3e3] p-0 pl-2 font-[380]">수정한 날짜</th>
            <th className="border-r border-[#e3e3e3] p-0 pl-2 font-[380]">유형</th>
            <th className="relative p-0 pl-2 font-[380]">크기<span className="absolute inset-y-0 -right-[5px] w-px bg-[#e3e3e3]" /></th>
          </tr>
        </thead>
        <tbody className="text-[#606060]">
          <tr aria-hidden="true" className="h-2"><td colSpan={4} className="p-0" /></tr>
          {files.map((f) => (
            <tr key={f.name} aria-selected={!!f.selected} className={`h-[27px] whitespace-nowrap ${f.selected ? 'bg-[#cce8ff] outline outline-1 -outline-offset-1 outline-[#99d1ff]' : ''}`}>
              <td className="p-0 pl-1">
                <span className="flex items-center gap-[5px]">
                  <span className="flex w-[21px] shrink-0 justify-center">{f.icon}</span>
                  <span className={`text-black ${f.latin ? 'text-[15px]' : 'text-[16px]'}`}>{f.name}</span>
                </span>
              </td>
              <td className="p-0 pl-2 text-[15px]">{f.date}</td>
              <td className="p-0 pl-2">{f.type}</td>
              <td className="p-0 pr-[5px] text-right text-[14px]">{f.size}</td>
            </tr>
          ))}
        </tbody>
      </table>
    </main>
  );
}

export default function App() {
  return (
    <div className="relative flex min-h-screen flex-col overflow-hidden bg-linear-to-r from-[#009fe8] via-[#0079d2] to-[#0043ac] px-[7px] pt-[7px] pb-2 font-['Open_Sans','Noto_Sans_CJK_KR',sans-serif] text-[16px] leading-[22px] font-[380]">
      <div className="flex grow flex-col bg-white shadow-[0_2px_8px_rgba(0,0,0,0.4)]">
        <TitleBar />
        <Tabs />
        <Ribbon />
        <AddressRow />
        <div className="flex grow">
          <Tree />
          <FileTable />
        </div>
        <footer className="flex h-[30px] items-center pb-px pr-[11px] pl-[17px] text-[#17345e]">
          <span>7개 항목</span>
          <span className="ml-[25px]">1개 항목 선택함</span>
          <button aria-label="자세히" className="ml-auto flex h-[29px] w-7 items-center justify-center border border-[#2ba3e2] bg-[#cbe8f6]">
            <svg viewBox="0 0 18 16" className="h-4 w-[18px]"><path d="M.5.5h5v15h-5zM.5 5.500h5M.5 10.500h5" fill="#fff" stroke="#999" /><path d="M2 2h2v2H2z" fill="#3b7bbf" /><path d="M2 7h2v2H2z" fill="#3f9a49" /><path d="M2 12h2v2H2z" fill="#c0392b" /><path d="M7 2.500h5M13 2.500h5M7 7.500h5M13 7.500h5M7 12.500h5M13 12.500h5" stroke="#777" /></svg>
          </button>
          <button aria-label="큰 아이콘" className="ml-[5px]">{treeIcons.photo}</button>
        </footer>
      </div>
      <ContextMenu />
      <p className="absolute left-[770px] top-[811px] font-['Liberation_Sans','Noto_Sans_CJK_KR',sans-serif] text-[28px] leading-[35px] font-bold whitespace-nowrap text-[#0000f5]">
        편집 수정 완료한<br />Backup 폴더를 복사해서 ~
      </p>
    </div>
  );
}
